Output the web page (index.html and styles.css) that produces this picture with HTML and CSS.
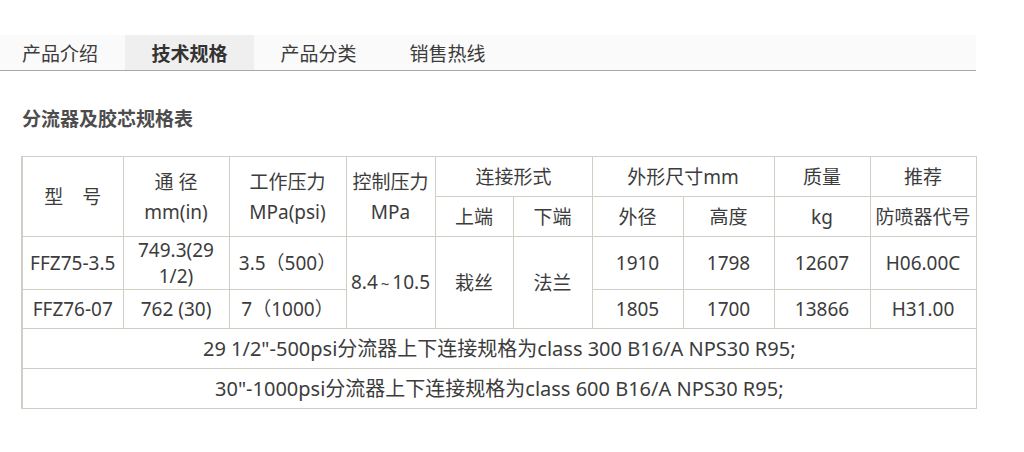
FILE: index.html
```html
<!DOCTYPE html>
<html lang="zh-CN">
<head>
<meta charset="utf-8">
<title>技术规格</title>
<link rel="stylesheet" href="styles.css">
</head>
<body>
<div class="page">
  <nav class="tabs">
    <div class="tab tab-first">产品介绍</div>
    <div class="tab tab-active">技术规格</div>
    <div class="tab">产品分类</div>
    <div class="tab">销售热线</div>
  </nav>
  <h2 class="title">分流器及胶芯规格表</h2>
  <table class="spec">
    <colgroup>
      <col class="c1"><col class="c2"><col class="c3"><col class="c4"><col class="c5">
      <col class="c6"><col class="c7"><col class="c8"><col class="c9"><col class="c10">
    </colgroup>
    <tr class="h1">
      <td rowspan="2" class="hd">型　号</td>
      <td rowspan="2" class="hd">通 径<br>mm(in)</td>
      <td rowspan="2" class="hd">工作压力<br>MPa(psi)</td>
      <td rowspan="2" class="hd hd-top">控制压力<br>MPa</td>
      <td colspan="2">连接形式</td>
      <td colspan="2">外形尺寸mm</td>
      <td>质量</td>
      <td>推荐</td>
    </tr>
    <tr class="h2">
      <td>上端</td>
      <td>下端</td>
      <td>外径</td>
      <td>高度</td>
      <td>kg</td>
      <td>防喷器代号</td>
    </tr>
    <tr class="r1">
      <td>FFZ75-3.5</td>
      <td class="wrap">749.3(29 1/2)</td>
      <td>3.5（500）</td>
      <td rowspan="2">8.4<span class="tilde">~</span>10.5</td>
      <td rowspan="2">栽丝</td>
      <td rowspan="2">法兰</td>
      <td>1910</td>
      <td>1798</td>
      <td>12607</td>
      <td>H06.00C</td>
    </tr>
    <tr class="r2">
      <td>FFZ76-07</td>
      <td>762 (30)</td>
      <td>7（1000）</td>
      <td>1805</td>
      <td>1700</td>
      <td>13866</td>
      <td>H31.00</td>
    </tr>
    <tr class="note">
      <td colspan="10">29 1/2"-500psi分流器上下连接规格为class 300 B16/A NPS30 R95;</td>
    </tr>
    <tr class="note">
      <td colspan="10">30"-1000psi分流器上下连接规格为class 600 B16/A NPS30 R95;</td>
    </tr>
  </table>
</div>
</body>
</html>
```
FILE: styles.css
```css
html, body {
  margin: 0;
  padding: 0;
  background: #ffffff;
}

body {
  font-family: "Noto Sans", "Noto Sans CJK SC", sans-serif;
  color: #3c3c3c;
}

.page {
  width: 1024px;
  padding-top: 35px;
}

.tabs {
  display: flex;
  width: 976px;
  height: 35px;
  background: #fafafa;
  border-bottom: 1px solid #a9a9a9;
}

.tab {
  width: 129px;
  height: 35px;
  box-sizing: border-box;
  overflow: hidden;
  text-align: center;
  font-size: 19px;
  line-height: 39px;
  color: #3c3c3c;
}

.tab-first {
  width: 125px;
  padding-right: 5px;
}

.tab-active {
  background: #efefef;
  font-weight: bold;
  color: #333333;
}

.title {
  margin: 35px 0 0 22px;
  font-size: 19px;
  line-height: 26px;
  font-weight: bold;
  color: #4d4d4d;
}

.spec {
  margin: 24px 0 0 21px;
  width: 955px;
  table-layout: fixed;
  border-collapse: collapse;
  border-left: 2px solid #d0cfc5;
  font-size: 19px;
  color: #3c3c3c;
}

.spec td {
  border: 1px solid #d0cfc5;
  padding: 0;
  text-align: center;
  vertical-align: middle;
  line-height: 26px;
  white-space: nowrap;
}

.spec td.wrap {
  white-space: normal;
}

.spec td.hd {
  line-height: 30px;
}

.tilde {
  padding: 0 3px;
  font-size: 15px;
}

.c1 { width: 101px; }
.c2 { width: 106px; }
.c3 { width: 117px; }
.c4 { width: 89px; }
.c5 { width: 78px; }
.c6 { width: 79px; }
.c7 { width: 91px; }
.c8 { width: 91px; }
.c9 { width: 96px; }
.c10 { width: 106px; }

.h1 { height: 40px; }
.h2 { height: 40px; }
.r1 { height: 53px; }
.r2 { height: 39px; }
.note { height: 40px; }

.spec .note td {
  font-size: 20px;
}
```
